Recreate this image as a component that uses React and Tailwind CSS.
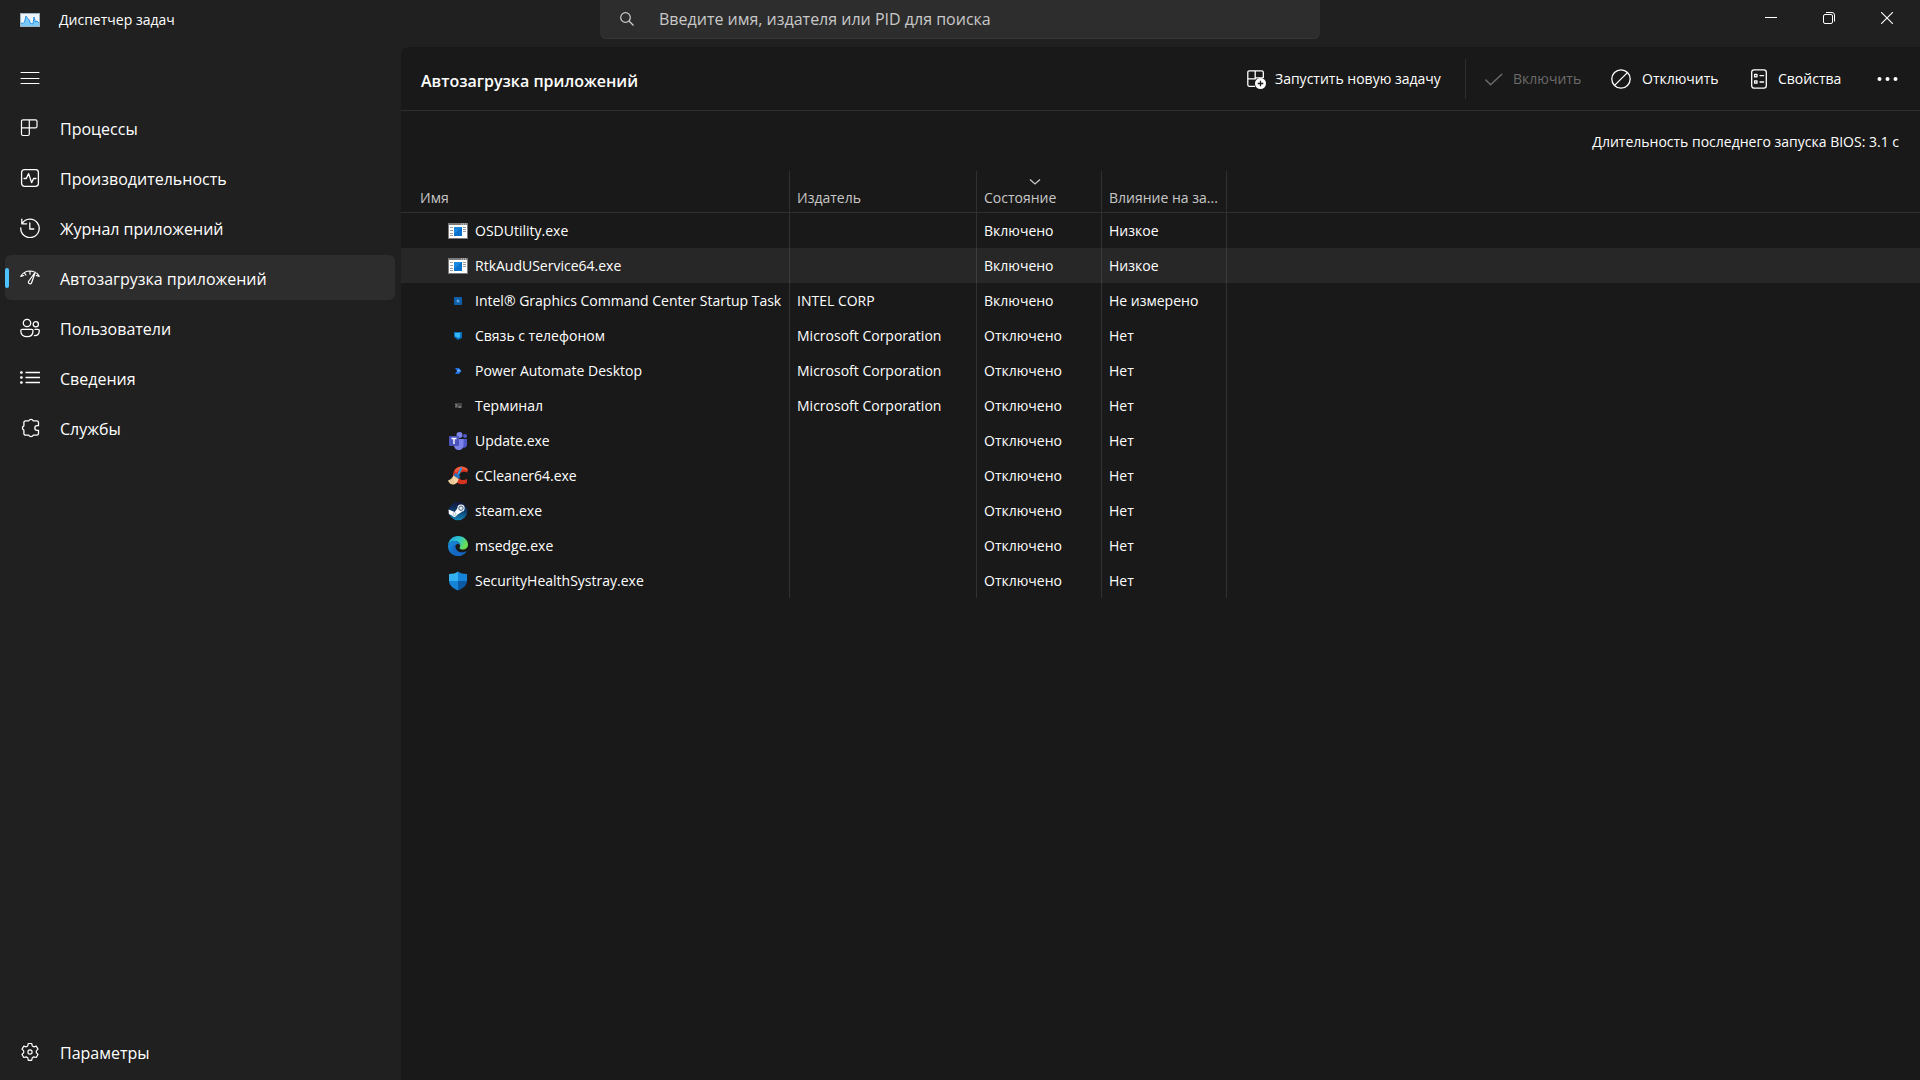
import React, { useState } from "react";

const ICON = "h-5 w-5 shrink-0";

function Stroke({ children, width = 1.2 }) {
  return (
    <svg viewBox="0 0 20 20" className={ICON} fill="none" stroke="currentColor" strokeWidth={width} strokeLinecap="round" strokeLinejoin="round">
      {children}
    </svg>
  );
}

const MenuIcon = () => <Stroke width={1}><path d="M1 4.5h18M1 10.5h18M1 15.5h18" /></Stroke>;

const ProcessesIcon = () => (
  <Stroke><path d="M3 1.8h12.5a1.5 1.5 0 0 1 1.5 1.5v5a1.5 1.5 0 0 1-1.5 1.5H9.3v6.2a1.5 1.5 0 0 1-1.5 1.5H3A1.5 1.5 0 0 1 1.5 16V3.3A1.5 1.5 0 0 1 3 1.8zM9.3 1.8v8M1.5 9.8h7.8" /></Stroke>
);

const PerformanceIcon = () => (
  <Stroke width={1.3}>
    <rect x="1.6" y="1.6" width="16.8" height="16.8" rx="2.8" />
    <path d="M4 10.5h2.3L8.6 5.6l3 9 2-4.1H16" />
  </Stroke>
);

const HistoryIcon = () => (
  <Stroke width={1.3}>
    <path d="M1.8 1.2v4.6h4.8M2.2 5.5A9.2 9.2 0 1 1 .8 10M9.8 5v6h4" />
  </Stroke>
);

const StartupIcon = () => (
  <Stroke>
    <path d="M.8 8.3C2.600 5 6 3 10 3c1.400 0 2.700.2 3.900.7M.8 8.300l2.900-.8M4.400 4.800l1.500 2.200M10 3.200v3M16.800 5.200c.9.800 1.700 1.900 2.400 3.100l-2.900-.8" />
    <path d="M15.300 4.200L8.500 13.500a1.700 1.700 0 0 0 2.900 1.700z" />
  </Stroke>
);

const UsersIcon = () => (
  <Stroke width={1.3}>
    <circle cx="7" cy="5" r="3.7" />
    <circle cx="15.8" cy="6.2" r="2.6" />
    <path d="M2.4 11.3h9.2a1.4 1.4 0 0 1 1.4 1.4c0 3.9-2.5 6-6 6s-6.2-2.1-6.2-6a1.4 1.4 0 0 1 1.6-1.4zM15 11.3h2.9a1.4 1.4 0 0 1 1.4 1.4c0 3-1.7 4.9-4.9 4.9" />
  </Stroke>
);

const DetailsIcon = () => (
  <Stroke width={1.3}>
    <path d="M6 4.5h13.5M6 9.5h13.5M6 14.5h13.5" />
    <path d="M1.2 4.5h.4M1.2 9.5h.4M1.2 14.5h.4" strokeWidth="2.4" />
  </Stroke>
);

const ServicesIcon = () => (
  <Stroke width={1.3}>
    <path d="M8.800 2.800a2.400 2.400 0 0 1 4.400 0h3.600a1.700 1.700 0 0 1 1.700 1.700v3.200h-1.400a2.300 2.300 0 0 0 0 4.600h1.400v3.200a1.700 1.700 0 0 1-1.700 1.700h-3.600a2.400 2.400 0 0 1-4.400 0H5.600a1.700 1.700 0 0 1-1.700-1.700v-3.300a2.400 2.400 0 0 1 0-4.400V4.500a1.700 1.700 0 0 1 1.700-1.700z" />
  </Stroke>
);

const SettingsIcon = () => (
  <Stroke>
    <path d="M8.3 1.5h3.4l.6 2.4 1.5.9 2.4-.7 1.8 3-1.7 1.8v1.8l1.7 1.8-1.8 3-2.4-.7-1.5.9-.6 2.6H8.3l-.6-2.6-1.5-.9-2.4.7-1.8-3 1.7-1.8V8.9L2 7.1l1.8-3 2.4.7 1.5-.9z" />
    <circle cx="10" cy="10" r="2.1" />
  </Stroke>
);

const RunIcon = () => (
  <svg viewBox="0 0 20 20" className={ICON} fill="none" stroke="currentColor" strokeWidth="1.3">
    <path d="M9 17.3H3.3a1.5 1.5 0 0 1-1.5-1.5V3.3a1.5 1.5 0 0 1 1.5-1.5h12.5a1.5 1.5 0 0 1 1.5 1.500V9M9.200 1.800v8H1.800M9.200 8.800h8" />
    <circle cx="14.5" cy="14.5" r="5.5" fill="#fff" stroke="none" />
    <path d="M14.5 11.7v5.6M11.7 14.5h5.6" stroke="#191919" />
  </svg>
);

const CheckIcon = () => <Stroke width={1.5}><path d="M1.8 11l4.8 4.7L17.8 5.2" /></Stroke>;
const BlockIcon = () => (
  <Stroke width={1.3}><circle cx="10" cy="10" r="9.2" /><path d="M3.6 16.4L16.4 3.6" /></Stroke>
);
const PropertiesIcon = () => (
  <Stroke width={1.3}>
    <rect x="2.7" y=".8" width="14.6" height="18.4" rx="2.4" />
    <rect x="5.6" y="5.4" width="2.4" height="2.4" />
    <rect x="5.6" y="11.8" width="2.4" height="2.4" />
    <path d="M11 6.6h3.6M11 13h3.6" />
  </Stroke>
);
const MoreIcon = () => (
  <svg viewBox="0 0 21 20" className="h-5 w-[21px]" fill="currentColor">
    <circle cx="2.5" cy="10" r="2" /><circle cx="10.5" cy="10" r="2" /><circle cx="18.5" cy="10" r="2" />
  </svg>
);

const LogoIcon = () => (
  <svg viewBox="0 0 20 14" className="h-[14px] w-5 shrink-0">
    <path d="M0 0h20v14H0z" fill="#9fb4c2" />
    <path d="M1 1h18v12H1z" fill="#eef3f6" />
    <path d="M1 10l2 .5L4.5 9 6 3l1.5 2.5L9 6.5l1.5 4 2.5.5 1-7 1.5 5 1.5-1 2 2v3H1z" fill="#7cc8fa" />
    <path d="M1 10l2 .5L4.5 9 6 3l1.5 2.5L9 6.5l1.5 4 2.5.5 1-7 1.5 5 1.5-1 2 2" fill="none" stroke="#2b93e6" />
  </svg>
);

const ExeIcon = () => (
  <svg viewBox="0 0 20 16" className="h-4 w-5">
    <path d="M0 0h20v16H0z" fill="#7b7b7b" />
    <path d="M1 2h18v13H1z" fill="#fff" />
    <path d="M13 1h1M15 1h1M17 1h1" stroke="#ddd" />
    <path d="M2 4.5h3M2 7.5h3M2 10.5h3M2 12.5h3M15 4.5h3M15 6.5h3M15 8.5h3" stroke="#9a9a9a" />
    <path d="M6 4h8v9H6z" fill="#0a72cc" />
    <path d="M6 4h8L6 11z" fill="#1b87de" />
  </svg>
);

const IntelIcon = () => (
  <svg viewBox="0 0 20 20" className={ICON}>
    <rect x="6" y="6" width="8" height="8" rx="1" fill="#0f5ea8" />
    <path d="M10 8.500v3M8.500 10h3" stroke="#7cb9ec" />
  </svg>
);

const PhoneIcon = () => (
  <svg viewBox="0 0 20 20" className={ICON}>
    <path d="M6 6h8v6l-4 2-4-3z" fill="#0b6fc0" />
    <path d="M7 7h5v4l-2 1-3-2z" fill="#35b8f2" />
  </svg>
);

const AutomateIcon = () => (
  <svg viewBox="0 0 20 20" className={ICON}>
    <path d="M7 7h4l2.5 3-2.5 3H7l2-3z" fill="#1f6fe0" />
    <path d="M10 8l3 2-4 1z" fill="#79b9ff" />
  </svg>
);

const TerminalIcon = () => (
  <svg viewBox="0 0 20 20" className={ICON}>
    <path d="M7 7h7v5H7z" fill="#444" />
    <path d="M7.5 8L9 9.5 7.5 11M10.5 11H13" stroke="#bbb" strokeWidth=".8" fill="none" />
  </svg>
);

const TeamsIcon = () => (
  <svg viewBox="0 0 20 20" className={ICON}>
    <circle cx="11.5" cy="4" r="3" fill="#7b83eb" />
    <circle cx="17" cy="5" r="2" fill="#5059c9" />
    <path d="M13 8h6v6a3 3 0 0 1-5 2z" fill="#5059c9" />
    <path d="M6 8h9.5v6c0 3.5-2 5-4.7 5S6 17 6 14z" fill="#7b83eb" />
    <rect x="1" y="5" width="10" height="10" rx="1" fill="#4b53bc" />
    <path d="M3.5 7.5h5M6 7.5V13" stroke="#fff" strokeWidth="1.4" />
  </svg>
);

const CCleanerIcon = () => (
  <svg viewBox="0 0 20 20" className={ICON}>
    <path d="M19.500 6.500V3C17 .3 13.500-.2 10.500 1 5.500 3 3.500 9 6 13.500c2.500 4.700 8.500 6.200 13 3.500v-4c-3.300 2-7.500 1.300-8.300-2C10 7.500 14.500 4.500 19.500 6.500z" fill="#d5321f" />
    <path d="M6.500 4.500C9-.3 16-1 19.500 3v2C15 2.500 10 3.500 8 7z" fill="#f05a3c" />
    <path d="M13 2.500L10.500 8" stroke="#2f9be8" strokeWidth="2" strokeLinecap="round" />
    <path d="M7.500 7l5 3.500-2 2.500-5-3.500z" fill="#2474c4" />
    <path d="M5.500 9.500l5 3.500c-.6 3-2.500 5.500-5.500 5.500-2.200 0-4-1.500-5-4 2.500-.5 4.300-2.500 5.500-5z" fill="#f3d5a5" />
    <path d="M3.500 13l3 4M2 14l2.500 4" stroke="#d7aa70" strokeWidth=".7" />
  </svg>
);

const SteamIcon = () => (
  <svg viewBox="0 0 20 20" className={ICON}>
    <defs>
      <linearGradient id="steam" x1="0" y1="0" x2="0" y2="1">
        <stop offset="0" stopColor="#14163a" />
        <stop offset=".5" stopColor="#0c3b6b" />
        <stop offset="1" stopColor="#1387b8" />
      </linearGradient>
    </defs>
    <circle cx="10" cy="10" r="9.300" fill="url(#steam)" />
    <path d="M.6 8.500l6 2.500L9.800 7l4.200 3.700-5 3.300a2.700 2.700 0 0 1-5 .5L.8 13z" fill="#fff" />
    <circle cx="13" cy="7.200" r="3.600" fill="#fff" />
    <circle cx="13" cy="7.200" r="2.200" fill="#e8edf2" stroke="#2a4872" strokeWidth=".9" />
    <circle cx="6.500" cy="13" r="1.500" fill="none" stroke="#7c93ad" strokeWidth=".6" />
  </svg>
);

const EdgeIcon = () => (
  <svg viewBox="0 0 20 20" className={ICON}>
    <defs>
      <linearGradient id="edgeTop" x1="0" y1="0" x2="1" y2=".4">
        <stop offset="0" stopColor="#1f9fe0" />
        <stop offset=".55" stopColor="#2cc4d0" />
        <stop offset="1" stopColor="#6be04e" />
      </linearGradient>
      <linearGradient id="edgeBody" x1="0" y1="0" x2="1" y2="1">
        <stop offset="0" stopColor="#1a8fe0" />
        <stop offset="1" stopColor="#0b4fa8" />
      </linearGradient>
    </defs>
    <path d="M0 9.500C.5 4 4.500 0 10 0c6 0 10 4.300 10 8.500 0 3.300-2.400 5-5.200 5-2 0-3.300-.8-3.300-1.600 0-.6.7-.8.7-2.200C12.200 7 9.500 5 6.200 5 3.500 5 1.200 6.500 0 9.500z" fill="url(#edgeTop)" />
    <path d="M0 9.500C1.200 6.500 3.500 5 6.200 5c3.300 0 5.800 1.700 6 4.200-1-1-2.500-1.500-3.700-.8-2 1.200-1.500 4.300.2 6 2.300 2.400 6.200 2.600 9.200.8.400-.2.700.1.400.6A10 10 0 0 1 10 20C4.300 20-.4 15.500 0 9.500z" fill="url(#edgeBody)" />
    <path d="M6.800 8.500c-3 2.500-2.500 9 3.200 11.500 3.300 0 6.500-1.600 8.300-4.200-4 2.200-10.500 1.200-11.500-7.300z" fill="#1668c4" />
  </svg>
);

const ShieldIcon = () => (
  <svg viewBox="0 0 20 20" className={ICON}>
    <path d="M10 .5C7.500 2.300 4.500 3 1 3v7h9z" fill="#33b1f0" />
    <path d="M10 .5C12.500 2.300 15.500 3 19 3v7h-9z" fill="#1684d8" />
    <path d="M1 10h9v9.500C5 17.500 1.300 14.500 1 10z" fill="#1583d6" />
    <path d="M19 10h-9v9.500c5-2 8.700-5 9-9.500z" fill="#0c59a4" />
  </svg>
);

const NAV = [
  { label: "Процессы", Icon: ProcessesIcon },
  { label: "Производительность", Icon: PerformanceIcon },
  { label: "Журнал приложений", Icon: HistoryIcon },
  { label: "Автозагрузка приложений", Icon: StartupIcon },
  { label: "Пользователи", Icon: UsersIcon },
  { label: "Сведения", Icon: DetailsIcon },
  { label: "Службы", Icon: ServicesIcon },
];

const APPS = [
  { name: "OSDUtility.exe", publisher: "", status: "Включено", impact: "Низкое", Icon: ExeIcon },
  { name: "RtkAudUService64.exe", publisher: "", status: "Включено", impact: "Низкое", Icon: ExeIcon },
  { name: "Intel® Graphics Command Center Startup Task", publisher: "INTEL CORP", status: "Включено", impact: "Не измерено", Icon: IntelIcon },
  { name: "Связь с телефоном", publisher: "Microsoft Corporation", status: "Отключено", impact: "Нет", Icon: PhoneIcon },
  { name: "Power Automate Desktop", publisher: "Microsoft Corporation", status: "Отключено", impact: "Нет", Icon: AutomateIcon },
  { name: "Терминал", publisher: "Microsoft Corporation", status: "Отключено", impact: "Нет", Icon: TerminalIcon },
  { name: "Update.exe", publisher: "", status: "Отключено", impact: "Нет", Icon: TeamsIcon },
  { name: "CCleaner64.exe", publisher: "", status: "Отключено", impact: "Нет", Icon: CCleanerIcon },
  { name: "steam.exe", publisher: "", status: "Отключено", impact: "Нет", Icon: SteamIcon },
  { name: "msedge.exe", publisher: "", status: "Отключено", impact: "Нет", Icon: EdgeIcon },
  { name: "SecurityHealthSystray.exe", publisher: "", status: "Отключено", impact: "Нет", Icon: ShieldIcon },
];

const CELL = "border-r border-white/10 px-[7px] whitespace-nowrap";

function TitleBar() {
  return (
    <header className="grid h-[47px] shrink-0 grid-cols-[1fr_720px_1fr] items-start">
      <div className="flex h-[39px] items-center gap-[19px] pl-5">
        <LogoIcon />
        <span className="text-sm">Диспетчер задач</span>
      </div>
      <label className="flex h-[39px] items-center gap-[25px] rounded-b-md border-b border-[#353535] bg-[#2d2d2d] pl-5">
        <svg viewBox="0 0 14 14" className="h-[14px] w-[14px] text-[#cfcfcf]" fill="none" stroke="currentColor" strokeWidth="1.2">
          <circle cx="5.5" cy="5.5" r="4.8" />
          <path d="M9 9l4.5 4.5" />
        </svg>
        <input type="text" aria-label="Поиск" placeholder="Введите имя, издателя или PID для поиска" className="min-w-0 flex-1 bg-transparent text-base outline-none placeholder:text-[#c8c8c8]" />
      </label>
      <div className="flex justify-end pr-1">
        <button aria-label="Свернуть" className="flex h-9 w-[58px] items-center justify-center">
          <svg viewBox="0 0 12 12" className="h-3 w-3"><path d="M0 5.500h12" stroke="#fff" /></svg>
        </button>
        <button aria-label="Восстановить" className="flex h-9 w-[58px] items-center justify-center">
          <svg viewBox="0 0 12 12" className="h-3 w-3" fill="none" stroke="#fff">
            <rect x=".5" y="2.500" width="9" height="9" rx="1.500" />
            <path d="M3 .5h6A2.500 2.500 0 0 1 11.500 3v6.500" />
          </svg>
        </button>
        <button aria-label="Закрыть" className="flex h-9 w-[58px] items-center justify-center">
          <svg viewBox="0 0 12 12" className="h-3 w-3"><path d="M0 0l12 12M12 0L0 12" stroke="#fff" strokeWidth="1.1" /></svg>
        </button>
      </div>
    </header>
  );
}

function NavButton({ label, Icon, active, onClick }) {
  return (
    <button
      onClick={onClick}
      className={`relative flex h-[45px] w-full items-center gap-5 rounded-md pl-[15px] text-left text-base ${active ? "bg-[#2d2d2d]" : ""}`}
    >
      {active && <span className="absolute top-[13px] left-0 h-5 w-1 rounded-full bg-[#4cc2ff]" />}
      <Icon />
      <span className="pt-0.5">{label}</span>
    </button>
  );
}

export default function App() {
  const [page, setPage] = useState(3);
  const [selected, setSelected] = useState(1);

  return (
    <div className="flex h-screen flex-col overflow-hidden bg-[#202020] font-['Open_Sans',sans-serif] text-white">
      <TitleBar />

      <div className="flex min-h-0 flex-1">
        <nav className="flex w-[401px] shrink-0 flex-col pr-[6px] pb-[6px] pl-[5px]">
          <button aria-label="Меню" className="flex h-[58px] items-center pt-1 pl-[15px]"><MenuIcon /></button>
          <div className="flex flex-col gap-[5px]">
            {NAV.map((item, i) => (
              <NavButton key={item.label} {...item} active={i === page} onClick={() => setPage(i)} />
            ))}
          </div>
          <div className="mt-auto">
            <NavButton label="Параметры" Icon={SettingsIcon} />
          </div>
        </nav>

        <main className="min-w-0 flex-1 rounded-tl-lg bg-[#191919]">
          <div className="flex h-16 items-center border-b border-[#2e2e2e] pl-5">
            <h1 className="pt-1 text-base font-semibold">Автозагрузка приложений</h1>
            <div className="ml-auto flex items-center text-sm">
              <button className="flex w-[219px] items-center gap-[9px]"><RunIcon />Запустить новую задачу</button>
              <span className="h-10 w-px bg-[#2e2e2e]" />
              <button disabled className="ml-[18px] flex w-[127px] items-center gap-[9px] text-[#6b6b6b]"><CheckIcon />Включить</button>
              <button className="flex w-[138px] items-center gap-[11px]"><BlockIcon />Отключить</button>
              <button className="flex w-[128px] items-center gap-[9px]"><PropertiesIcon />Свойства</button>
              <button aria-label="Ещё" className="w-[43px]"><MoreIcon /></button>
            </div>
          </div>

          <p className="flex h-[60px] items-center justify-end pt-0.5 pr-[21px] text-sm">Длительность последнего запуска BIOS: 3.1 с</p>

          <table className="w-full table-fixed border-separate border-spacing-0 text-left text-sm">
            <colgroup>
              <col className="w-[389px]" />
              <col className="w-[187px]" />
              <col className="w-[125px]" />
              <col className="w-[125px]" />
              <col />
            </colgroup>
            <thead>
              <tr className="h-[42px] align-bottom text-[#c8c8c8]">
                <th className={`${CELL} border-b pb-1 pl-[19px] font-normal`}>Имя</th>
                <th className={`${CELL} border-b pb-1 font-normal`}>Издатель</th>
                <th className={`${CELL} border-b pb-1 font-normal`} aria-sort="descending">
                  <div className="flex justify-center pr-2 pb-[3px]">
                    <svg viewBox="0 0 12 6" className="h-[6px] w-3" fill="none" stroke="currentColor" strokeWidth="1.3">
                      <path d="M1 .5L6 5l5-4.5" />
                    </svg>
                  </div>
                  Состояние
                </th>
                <th className={`${CELL} border-b pb-1 font-normal`}>Влияние на за...</th>
                <th className="border-b border-white/10" />
              </tr>
            </thead>
            <tbody>
              {APPS.map(({ name, publisher, status, impact, Icon }, i) => (
                <tr key={name} onClick={() => setSelected(i)} className={`h-[35px] ${i === selected ? "bg-[#272727]" : ""}`}>
                  <td className={`${CELL} pl-[47px]`}>
                    <div className="flex items-center gap-[7px]"><Icon />{name}</div>
                  </td>
                  <td className={CELL}>{publisher}</td>
                  <td className={CELL}>{status}</td>
                  <td className={CELL}>{impact}</td>
                  <td />
                </tr>
              ))}
            </tbody>
          </table>
        </main>
      </div>
    </div>
  );
}
